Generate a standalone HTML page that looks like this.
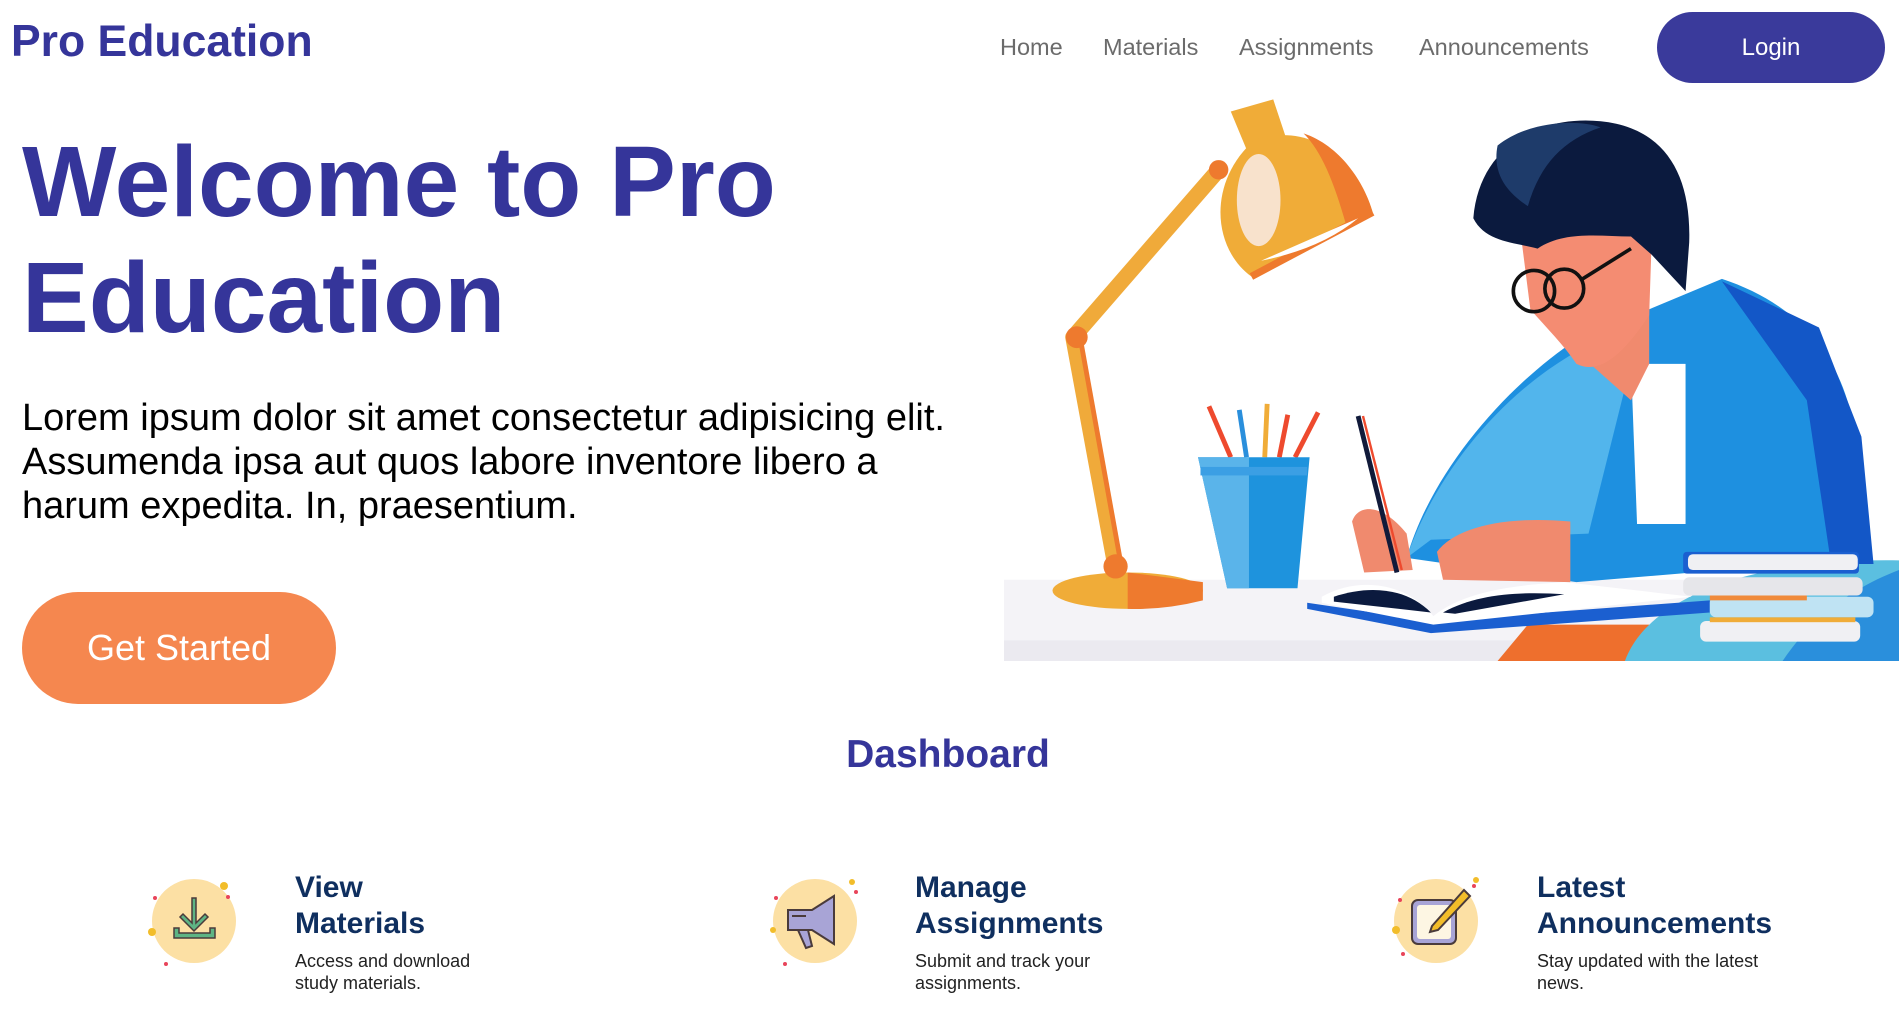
<!DOCTYPE html>
<html><head><meta charset="utf-8"><style>
*{margin:0;padding:0;box-sizing:border-box}
body{width:1901px;height:1023px;overflow:hidden;background:#fff;font-family:"Liberation Sans",Arial,sans-serif;position:relative}
.abs{position:absolute;white-space:nowrap}
.logo{left:11px;top:17px;font-size:44.5px;font-weight:bold;color:#35359a}
.nav{top:34px;font-size:23.5px;color:#6b6b6b}
.login{left:1657px;top:12px;width:228px;height:71px;border-radius:36px;background:#3a3a9b;color:#fff;font-size:24px;display:flex;align-items:center;justify-content:center}
h1{position:absolute;left:22px;top:124px;font-size:100px;line-height:116px;color:#35359a;font-weight:bold}
.lead{left:22px;top:396px;font-size:38px;line-height:44px;color:#000}
.btn{left:22px;top:592px;width:314px;height:112px;border-radius:56px;background:#f5874f;color:#fff;font-size:36px;display:flex;align-items:center;justify-content:center}
.dash{left:0;width:1896px;text-align:center;top:733px;font-size:39px;font-weight:bold;color:#35359a}
.ct{font-size:30px;font-weight:bold;color:#0f2f5f;line-height:36px}
.cd{font-size:18px;color:#222;line-height:22px}
</style></head><body>
<div class="abs logo">Pro Education</div>
<div class="abs nav" style="left:1000px">Home</div>
<div class="abs nav" style="left:1103px">Materials</div>
<div class="abs nav" style="left:1239px">Assignments</div>
<div class="abs nav" style="left:1419px">Announcements</div>
<div class="abs login">Login</div>
<h1>Welcome to Pro<br>Education</h1>
<div class="abs lead">Lorem ipsum dolor sit amet consectetur adipisicing elit.<br>Assumenda ipsa aut quos labore inventore libero a<br>harum expedita. In, praesentium.</div>
<div class="abs btn">Get Started</div>

<svg class="abs" style="left:1004px;top:97px" width="895" height="564" viewBox="828 80 738 465" preserveAspectRatio="none">
<rect x="828" y="478" width="738" height="67" fill="#f4f3f7"/>
<rect x="828" y="528" width="738" height="17" fill="#ebeaf0"/>
<path d="M1235 545 L1260 515 L1360 515 L1360 545Z" fill="#ee6f2d"/>
<path d="M1340 545 C1360 490 1450 460 1566 462 L1566 545Z" fill="#5bbfe0"/>
<path d="M1470 545 C1500 500 1540 480 1566 470 L1566 545Z" fill="#2a8fdc"/>
<ellipse cx="930" cy="487" rx="62" ry="15" fill="#f0ac38"/>
<path d="M930 472 L992 480 L992 495 Q960 503 930 502Z" fill="#ee7a2e"/>
<path d="M920 468 L885 278 L1005 140" fill="none" stroke="#f0aa3a" stroke-width="13" stroke-linejoin="round"/>
<path d="M925 468 L892 285" fill="none" stroke="#ee7a2e" stroke-width="4"/>
<circle cx="888" cy="278" r="9" fill="#ee7a2e"/>
<circle cx="1005" cy="140" r="8" fill="#ee7a2e"/>
<circle cx="920" cy="467" r="10" fill="#ee7a2e"/>
<path d="M1015 92 L1050 82 L1062 118 L1030 128Z" fill="#f0ac38"/>
<path d="M1035 115 C1085 100 1120 135 1132 175 L1032 228 C1000 205 995 150 1035 115Z" fill="#f0ac38"/>
<path d="M1075 110 C1105 120 1125 150 1132 175 L1110 185 C1100 150 1090 125 1075 110Z" fill="#ee7a2e"/>
<path d="M1132 175 L1032 228" stroke="#ee7a2e" stroke-width="6"/>
<path d="M1040 215 L1120 180 Q1090 205 1040 215Z" fill="#fff"/>
<ellipse cx="1038" cy="165" rx="18" ry="38" fill="#f8e2cc"/>
<line x1="1015" y1="377" x2="997" y2="335" stroke="#ee4a2e" stroke-width="4"/>
<line x1="1028" y1="377" x2="1022" y2="338" stroke="#2a8fdc" stroke-width="4"/>
<line x1="1043" y1="377" x2="1045" y2="333" stroke="#f0ac38" stroke-width="4"/>
<line x1="1055" y1="377" x2="1062" y2="342" stroke="#ee4a2e" stroke-width="4"/>
<line x1="1068" y1="377" x2="1087" y2="340" stroke="#ee4a2e" stroke-width="4"/>
<path d="M988 377 L1080 377 L1070 485 L1012 485Z" fill="#1e93dd"/>
<path d="M988 377 L1030 377 L1030 485 L1012 485Z" fill="#5ab4ea"/>
<rect x="990" y="385" width="88" height="7" fill="#3b9fe4"/>
<path d="M1160 460 C1180 390 1240 320 1300 280 L1420 230 C1480 250 1520 290 1530 360 L1540 460 L1300 480Z" fill="#1e90e0"/>
<path d="M1160 460 C1180 400 1230 330 1300 290 L1345 300 L1310 440 L1180 445Z" fill="#52b5ec"/>
<path d="M1420 232 L1500 270 L1535 360 L1545 465 L1510 465 L1490 330Z" fill="#1357c7"/>
<path d="M1345 300 L1390 300 L1390 432 L1350 432Z" fill="#fff"/>
<path d="M1295 250 L1360 230 L1360 300 L1345 330 L1300 290Z" fill="#f08a6e"/>
<path d="M1255 200 C1260 170 1300 150 1340 160 L1362 200 L1360 260 C1340 290 1320 310 1300 300 C1290 285 1275 270 1262 255Z" fill="#f48c72"/>
<path d="M1215 180 C1220 120 1270 95 1320 100 C1370 105 1395 140 1393 200 L1390 240 L1362 210 L1345 195 C1320 195 1290 190 1268 205 C1250 200 1225 200 1215 180Z" fill="#0b1a3e"/>
<path d="M1235 120 C1260 100 1300 98 1320 105 C1290 115 1270 135 1260 170 C1245 160 1230 145 1235 120Z" fill="#1e3b6a"/>
<circle cx="1265" cy="240" r="17" fill="none" stroke="#111" stroke-width="3"/>
<circle cx="1290" cy="238" r="16" fill="none" stroke="#111" stroke-width="3"/>
<line x1="1305" y1="230" x2="1345" y2="205" stroke="#111" stroke-width="3"/>
<path d="M1115 430 C1120 415 1140 415 1160 440 L1165 470 L1125 472Z" fill="#f08a6e"/>
<path d="M1185 455 C1200 435 1240 425 1295 430 L1295 480 L1190 478Z" fill="#f08a6e"/>
<line x1="1120" y1="343" x2="1152" y2="472" stroke="#111a3a" stroke-width="4"/>
<line x1="1124" y1="343" x2="1156" y2="470" stroke="#ee4a2e" stroke-width="2"/>
<path d="M1078 497 L1180 512 L1410 495 L1410 505 L1180 522 L1078 502Z" fill="#1b5fd0"/>
<path d="M1090 492 C1120 475 1160 480 1182 508 C1210 485 1260 482 1290 480 L1395 492 L1182 515 L1090 497Z" fill="#fff"/>
<path d="M1100 492 C1130 482 1160 485 1180 505 L1100 496Z" fill="#0b1a3e"/>
<path d="M1190 505 C1220 488 1260 488 1290 490 L1200 506Z" fill="#0b1a3e"/>
<rect x="1388" y="455" width="145" height="18" rx="3" fill="#1b5fd0"/>
<rect x="1392" y="457" width="140" height="13" rx="4" fill="#f0f0f3"/>
<rect x="1388" y="476" width="148" height="15" rx="5" fill="#e6e6ea"/>
<rect x="1410" y="492" width="135" height="17" rx="5" fill="#bfe3f3"/>
<rect x="1410" y="491" width="80" height="4" fill="#f08a3a"/>
<rect x="1402" y="512" width="132" height="17" rx="5" fill="#f0f0f3"/>
<rect x="1410" y="509" width="120" height="4" fill="#f0ac38"/>
</svg>

<div class="abs dash">Dashboard</div>

<svg class="abs" style="left:145px;top:872px" width="100" height="100" viewBox="0 0 100 100">
<circle cx="49" cy="49" r="42" fill="#fce0a4"/>
<circle cx="79" cy="14" r="4" fill="#f2bd2a"/><circle cx="7" cy="60" r="4" fill="#f2bd2a"/>
<circle cx="83" cy="25" r="2" fill="#e8445a"/><circle cx="10" cy="26" r="2" fill="#e8445a"/><circle cx="21" cy="92" r="2" fill="#e8445a"/>
<path d="M29 56 V66 H70 V56 H65 V61 H34 V56Z" fill="#5eb484" stroke="#4a3b3b" stroke-width="1.5"/>
<path d="M47 26 V51 L38 42 L35 45 L49 59 L63 45 L60 42 L51 51 V26Z" fill="#5eb484" stroke="#4a3b3b" stroke-width="1.5"/>
</svg>
<div class="abs ct" style="left:295px;top:870px">View<br>Materials</div>
<div class="abs cd" style="left:295px;top:950px">Access and download<br>study materials.</div>

<svg class="abs" style="left:766px;top:872px" width="100" height="100" viewBox="0 0 100 100">
<circle cx="49" cy="49" r="42" fill="#fce0a4"/>
<circle cx="86" cy="10" r="3" fill="#f2bd2a"/><circle cx="7" cy="58" r="3" fill="#f2bd2a"/>
<circle cx="90" cy="20" r="2" fill="#e8445a"/><circle cx="10" cy="26" r="2" fill="#e8445a"/><circle cx="19" cy="92" r="2" fill="#e8445a"/>
<path d="M22 38 L46 38 L68 24 L68 72 L46 58 L22 58Z" fill="#a8a4d6" stroke="#4a3b3b" stroke-width="2"/>
<path d="M32 58 L40 76 L46 74 L42 58Z" fill="#a8a4d6" stroke="#4a3b3b" stroke-width="2"/>
<line x1="26" y1="44" x2="40" y2="44" stroke="#4a3b3b" stroke-width="2"/>
</svg>
<div class="abs ct" style="left:915px;top:870px">Manage<br>Assignments</div>
<div class="abs cd" style="left:915px;top:950px">Submit and track your<br>assignments.</div>

<svg class="abs" style="left:1386px;top:872px" width="100" height="100" viewBox="0 0 100 100">
<circle cx="50" cy="49" r="42" fill="#fce0a4"/>
<circle cx="90" cy="8" r="3" fill="#f2bd2a"/><circle cx="10" cy="58" r="4" fill="#f2bd2a"/>
<circle cx="88" cy="14" r="2" fill="#e8445a"/><circle cx="14" cy="28" r="2" fill="#e8445a"/><circle cx="17" cy="82" r="2" fill="#e8445a"/>
<rect x="26" y="28" width="44" height="44" rx="6" fill="#a8a4d6" stroke="#4a3b3b" stroke-width="2"/>
<rect x="31" y="33" width="34" height="34" rx="3" fill="#fdf6e3"/>
<path d="M46 54 L78 18 L84 24 L52 58 L44 60Z" fill="#f2bd2a" stroke="#4a3b3b" stroke-width="2"/>
</svg>
<div class="abs ct" style="left:1537px;top:870px">Latest<br>Announcements</div>
<div class="abs cd" style="left:1537px;top:950px">Stay updated with the latest<br>news.</div>
</body></html>
